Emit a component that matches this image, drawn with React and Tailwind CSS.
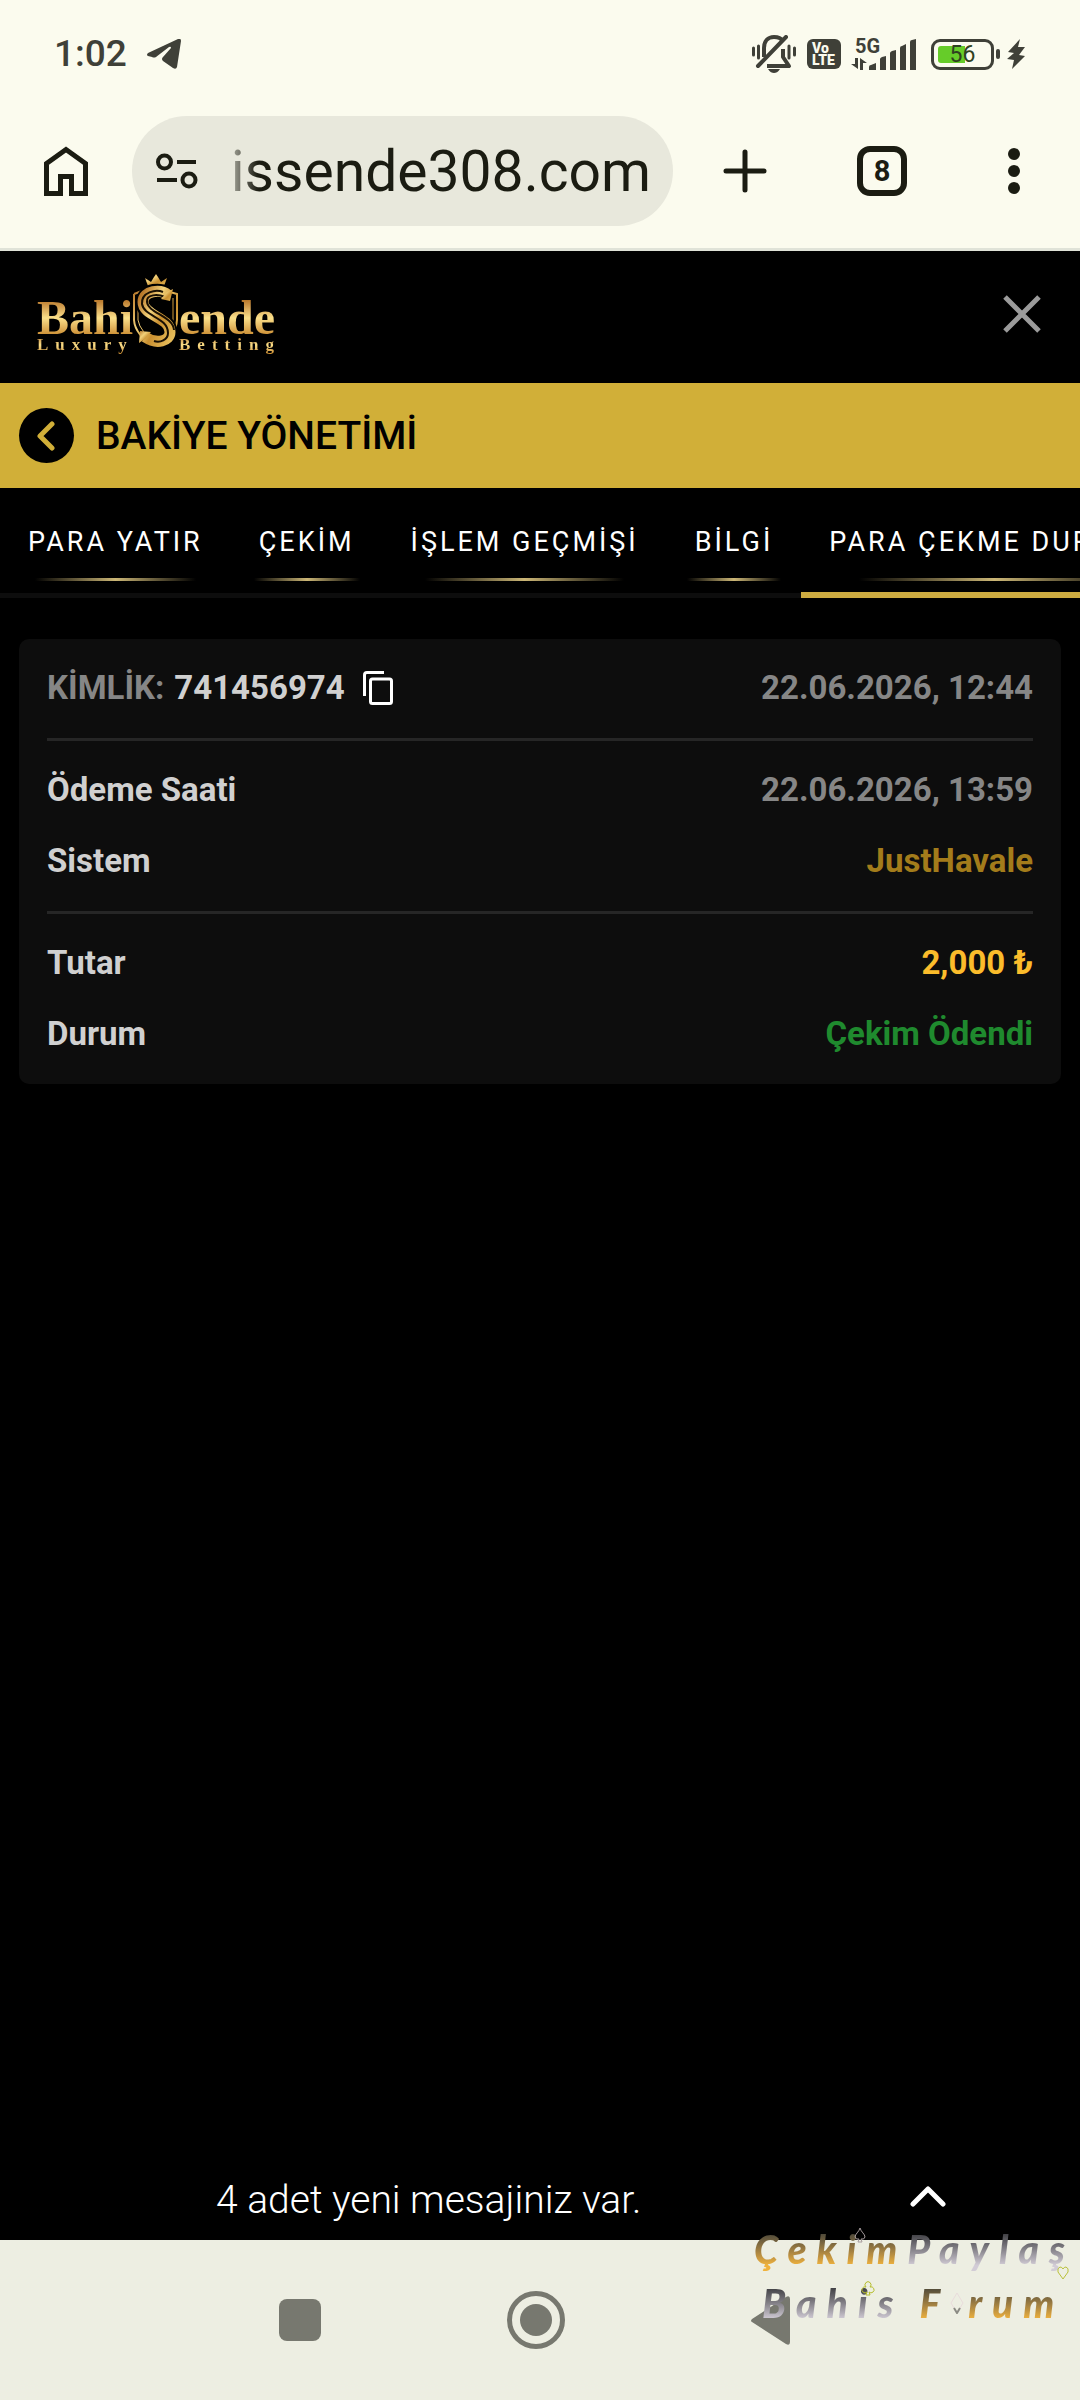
const tabs = ["PARA YATIR", "ÇEKİM", "İŞLEM GEÇMİŞİ", "BİLGİ", "PARA ÇEKME DURUMU"];
const activeTab = "PARA ÇEKME DURUMU";

const sections = [
  [
    { label: "Ödeme Saati", value: "22.06.2026, 13:59", color: "text-[#868686]" },
    { label: "Sistem", value: "JustHavale", color: "text-[#a37c1b]" },
  ],
  [
    { label: "Tutar", value: "2,000 ₺", color: "text-[#fbbc2b]" },
    { label: "Durum", value: "Çekim Ödendi", color: "text-[#1f8a2e]" },
  ],
];

function BellOffIcon() {
  return (
    <svg viewBox="0 0 44 38" className="w-11 h-[38px]" fill="none" stroke="currentColor" strokeWidth="4">
      <path d="M12 22V13C12 6 16 2 22 2c4 0 7 1 9 4" />
      <path d="M31 14v8l6 9H15" strokeLinejoin="round" />
      <path d="M6 31 34 2" strokeLinecap="round" />
      <path d="M16 34h12c-2 3-4 4-6 4s-4-1-6-4Z" fill="currentColor" stroke="none" />
      <path d="M1.500 13v7M6.500 11v12M37 11v12M42.500 13v7" strokeWidth="3" strokeLinecap="round" />
    </svg>
  );
}

function SignalIcon() {
  return (
    <div className="flex items-end">
      <div className="flex flex-col w-[18px] h-8">
        <span className="pl-1 text-[20px] leading-4 font-bold">5G</span>
        <svg viewBox="0 0 16 12" className="w-4 h-3 mt-auto" fill="currentColor">
          <path d="M4 0h3v11L0 6h4ZM9 12V0l7 5h-4v7Z" />
        </svg>
      </div>
      <svg viewBox="0 0 48 31" className="w-12 h-[31px]" fill="currentColor">
        <path d="M0 31v-3q0-2 2-2l5-2v7ZM11 31V20q0-1 2-2l4-1v14ZM21 31V14q0-1 2-2l4-1v20ZM31 31V9q0-2 2-2l4-2v26ZM41 31V3q0-2 2-2l4-1v31Z" />
      </svg>
    </div>
  );
}

function Battery() {
  return (
    <div className="flex items-center gap-[2px]">
      <div className="relative w-[63px] h-[31px] border-[3px] border-current rounded-[9px] p-1">
        <div className="w-[27px] h-full bg-[#66cc29] rounded-l-[3px]" />
        <span className="absolute inset-0 text-center text-[23px] leading-[26px] text-[#2f4020]">56</span>
      </div>
      <div className="w-1 h-[10px] bg-current rounded-[2px]" />
    </div>
  );
}

function StatusBar() {
  return (
    <div className="flex items-center justify-between h-[108px] pl-[54px] pr-[55px] text-[#3f4038]">
      <div className="flex items-center gap-5">
        <span className="text-[37px] leading-10 font-medium">1:02</span>
        <svg viewBox="0 0 34 30" className="w-[34px] h-[30px]" fill="currentColor">
          <path d="M1 14 31 0q3-1 3 2l-4 26q-1 3-4 1l-10-7q-2-2 0-4l8-9q0-2-2-1L9 18q-2 1-4 0l-4-1q-2-1 0-3Z" />
        </svg>
      </div>
      <div className="flex items-center">
        <BellOffIcon />
        <div className="flex flex-col justify-center w-[34px] h-[30px] ml-[11px] bg-[#3f4038] rounded-md text-[#fbfbee] text-[14px] leading-3 font-black pl-[5px]">
          <span>Vo</span>
          <span>LTE</span>
        </div>
        <div className="ml-[10px]">
          <SignalIcon />
        </div>
        <div className="ml-[14px]">
          <Battery />
        </div>
        <svg viewBox="0 0 18 30" className="w-[18px] h-[30px] ml-[7px]" fill="currentColor">
          <path d="M13 0 1 13l6 1-7 6 7 1-2 9L18 17l-6-1 6-8h-7Z" />
        </svg>
      </div>
    </div>
  );
}

function BrowserBar() {
  return (
    <div className="flex items-center pt-2 pb-[22px] pl-11 pr-[60px] text-[#1b1c12]">
      <button type="button" aria-label="Ana sayfa">
        <svg viewBox="0 0 44 50" className="w-11 h-[50px]" fill="none" stroke="currentColor" strokeWidth="5">
          <path d="M2.500 47.500V17.500L22 3.500l19.500 14v30H27.500v-17h-11v17Z" />
        </svg>
      </button>
      <div className="flex items-center flex-1 min-w-0 h-[110px] ml-11 pl-6 pr-[22px] bg-[#e8e8dc] rounded-full">
        <svg viewBox="0 0 42 36" className="w-[42px] h-9 shrink-0" fill="none" stroke="currentColor" strokeWidth="4">
          <circle cx="8.500" cy="9" r="6.500" />
          <path d="M21 9h19M1 27h20" />
          <circle cx="33" cy="27" r="6.500" />
        </svg>
        <input
          type="text"
          aria-label="Adres"
          defaultValue="issende308.com"
          className="flex-1 min-w-0 ml-5 pt-[2px] bg-transparent outline-none text-right text-[57px] leading-[70px] [mask-image:linear-gradient(to_right,transparent,black_40px)]"
        />
      </div>
      <button type="button" aria-label="Yeni sekme" className="ml-[50px]">
        <svg viewBox="0 0 44 44" className="w-11 h-11" fill="none" stroke="currentColor" strokeWidth="5" strokeLinecap="round">
          <path d="M22 3v38M3 22h38" />
        </svg>
      </button>
      <button
        type="button"
        aria-label="Sekmeler"
        className="ml-[90px] size-[50px] border-[6px] border-current rounded-[13px] text-[29px] leading-[38px] font-bold text-center"
      >
        8
      </button>
      <button type="button" aria-label="Menü" className="flex flex-col gap-[5px] ml-[101px]">
        <span className="size-3 rounded-full bg-current" />
        <span className="size-3 rounded-full bg-current" />
        <span className="size-3 rounded-full bg-current" />
      </button>
    </div>
  );
}

function Emblem() {
  return (
    <svg viewBox="0 0 46 76" className="w-[46px] h-[76px]" fill="none">
      <defs>
        <linearGradient id="gold" x1="0" y1="0" x2="1" y2="1">
          <stop offset="0" stopColor="#b9782a" />
          <stop offset="0.35" stopColor="#f3d27a" />
          <stop offset="0.6" stopColor="#c98f30" />
          <stop offset="1" stopColor="#e6bb58" />
        </linearGradient>
      </defs>
      <path d="M15 12 12 4l6 4 3-5 2-3 2 3 3 5 6-4-3 8Z" fill="url(#gold)" />
      <path d="M1 20l8-3M1 20v26q1 15 22 28 20-12 21-28V20l-7-2" stroke="url(#gold)" strokeWidth="2" />
      <path d="M5 24v22q2 12 18 22 15-9 17-22V24" stroke="url(#gold)" strokeWidth="1" />
      <path d="M36 21C30 15 10 15 10 29c0 13 27 14 27 29 0 9-13 14-25 5" stroke="#000" strokeWidth="15" />
      <path d="M35 21C28 15 10 16 10 28c0 14 27 15 27 30 0 9-13 13-25 5" stroke="url(#gold)" strokeWidth="11" />
      <path d="M30 18C23 15 8 18 9 30c2 13 26 13 26 29 0 7-8 10-14 8" stroke="#1a1003" strokeWidth="2" />
      <path d="M32 23C25 20 13 20 14 28c1 11 26 14 27 28" stroke="#1a1003" strokeWidth="2" />
      <path d="M28 25l9 2 3-12-6 3Z" fill="url(#gold)" />
      <path d="M18 58l-11-1-1 12 6-4Z" fill="url(#gold)" />
    </svg>
  );
}

const goldText = "bg-linear-to-b from-[#b9782a] via-[#fbe08a] to-[#c98a2c] bg-clip-text text-transparent";

function Logo() {
  return (
    <a href="#" aria-label="BahiSende Luxury Betting" className="flex items-end font-['Liberation_Serif',serif] font-bold">
      <span className="flex flex-col w-[96px]">
        <span className={`text-[48px] leading-9 ${goldText}`}>Bahi</span>
        <span className={`text-[17px] leading-[18px] tracking-[7px] ${goldText}`}>Luxury</span>
      </span>
      <span className="pb-1">
        <Emblem />
      </span>
      <span className="flex flex-col">
        <span className={`text-[48px] leading-9 ${goldText}`}>ende</span>
        <span className={`text-[17px] leading-[18px] tracking-[7px] ${goldText}`}>Betting</span>
      </span>
    </a>
  );
}

function Header() {
  return (
    <header className="flex items-center justify-between h-[132px] pb-[6px] px-[37px]">
      <Logo />
      <button type="button" aria-label="Kapat" className="text-[#9b9b9b]">
        <svg viewBox="0 0 42 42" className="w-[42px] h-[42px]" fill="none" stroke="currentColor" strokeWidth="5">
          <path d="M4 4l34 34M38 4 4 38" />
        </svg>
      </button>
    </header>
  );
}

function Tabs() {
  return (
    <nav className="flex overflow-hidden">
      {tabs.map((tab) => (
        <button
          key={tab}
          type="button"
          className={`flex flex-col items-center shrink-0 px-7 pt-9 h-[110px] text-[27px] leading-9 tracking-[3px] text-white whitespace-nowrap relative ${
            tab === activeTab ? "border-b-[6px] border-[#cdab41]" : "border-b-[5px] border-[#0d0d0d]"
          }`}
        >
          {tab}
          <span className="absolute top-[90px] left-[15%] w-[70%] h-[3px] bg-linear-to-r from-transparent via-[#cbb676] to-transparent" />
        </button>
      ))}
    </nav>
  );
}

function WithdrawalCard() {
  return (
    <section className="mx-[19px] mt-[41px] px-7 bg-[#0d0d0d] rounded-[10px] text-[33px] leading-10 font-bold text-[#d0d0d0]">
      <div className="flex items-center justify-between pt-[29px] pb-[30px] border-b-[3px] border-[#262626]">
        <div className="flex items-center">
          <span className="text-[#868686]">KİMLİK:</span>
          <span className="ml-[10px]">741456974</span>
          <button type="button" aria-label="Kopyala" className="ml-[18px] text-white">
            <svg viewBox="0 0 30 34" className="w-[30px] h-[34px]" fill="none" stroke="currentColor" strokeWidth="3">
              <path d="M1.500 25V4q0-2.500 2.500-2.500h17" />
              <rect x="7.500" y="8" width="21" height="24.500" rx="2" />
            </svg>
          </button>
        </div>
        <span className="text-[#868686]">22.06.2026, 12:44</span>
      </div>
      {sections.map((rows) => (
        <dl
          key={rows[0].label}
          className="flex flex-col gap-[31px] pt-[29px] pb-[30px] border-b-[3px] border-[#262626] last:border-b-0"
        >
          {rows.map((row) => (
            <div key={row.label} className="flex justify-between">
              <dt>{row.label}</dt>
              <dd className={row.color}>{row.value}</dd>
            </div>
          ))}
        </dl>
      ))}
    </section>
  );
}

const orangeInk = "bg-linear-to-b from-[#4a4638] from-20% to-[#f0b23c] to-80% bg-clip-text text-transparent";
const silverInk = "bg-linear-to-b from-[#3c3c40] from-20% to-[#d2ccd6] to-80% bg-clip-text text-transparent";

function Watermark() {
  return (
    <div className="absolute right-0 top-[-18px] w-[326px] font-['Lato',sans-serif] italic font-black text-[39px] leading-[54px] tracking-[10px] whitespace-nowrap pointer-events-none">
      <div className="flex">
        <span className={orangeInk}>Çekim</span>
        <span className={silverInk}>Paylaş</span>
      </div>
      <div className="flex items-center pl-2">
        <span className={silverInk}>Bahis</span>
        <span className={`ml-4 ${orangeInk}`}>F</span>
        <svg viewBox="0 0 14 22" className="w-[14px] h-[22px] mr-1" fill="none" stroke="#e9dcdc" strokeWidth="1">
          <path d="M7 1l6 10-6 10L1 11Z" />
          <path d="M4 16l3 5 3-5" stroke="#8b8b84" strokeWidth="2" />
        </svg>
        <span className={orangeInk}>rum</span>
      </div>
      <svg viewBox="0 0 12 16" className="absolute left-[100px] top-[5px] w-3 h-4" fill="none" stroke="#a79c9e">
        <path d="M6 1C5 5 1 7 1 10q1 3 4 2l-1 3h4l-1-3q3 1 4-2C11 7 7 5 6 1Z" />
      </svg>
      <svg viewBox="0 0 14 16" className="absolute left-[107px] top-[58px] w-[14px] h-4" fill="none" stroke="#b5bd2c">
        <path d="M5 7A3 3 0 1 1 9 7A3 3 0 1 1 8 12L9 15H5L6 12A3 3 0 1 1 5 7Z" />
      </svg>
      <svg viewBox="0 0 12 14" className="absolute right-[11px] top-[44px] w-3 h-[14px]" fill="none" stroke="#b9c03a">
        <path d="M6 13 1 6q-1-4 2-5 2 0 3 2 1-2 3-2 3 1 2 5Z" />
      </svg>
    </div>
  );
}

function SystemNav() {
  return (
    <footer className="relative flex items-center justify-center gap-[186px] h-40 pr-[11px] bg-[#edeee2] text-[#77786f]">
      <button type="button" aria-label="Son uygulamalar" className="size-[42px] rounded-lg bg-current" />
      <button
        type="button"
        aria-label="Ana ekran"
        className="flex items-center justify-center size-[58px] rounded-full border-[5px] border-current"
      >
        <span className="size-8 rounded-full bg-current" />
      </button>
      <button type="button" aria-label="Geri">
        <svg viewBox="0 0 39 49" className="w-[39px] h-[49px]" fill="currentColor">
          <path d="M1 23 35 1q4-2 4 2v43q0 4-4 2L1 26q-2-1 0-3Z" />
        </svg>
      </button>
      <Watermark />
    </footer>
  );
}

export default function App() {
  return (
    <div className="flex flex-col min-h-screen bg-black font-['Roboto',sans-serif]">
      <div className="bg-[#fbfbee] border-b-[3px] border-[#e0e3d8]">
        <StatusBar />
        <BrowserBar />
      </div>

      <Header />

      <div className="flex items-center h-[105px] pl-[19px] bg-[#d1af38]">
        <button type="button" aria-label="Geri dön" className="flex items-center justify-center size-[55px] rounded-full bg-black">
          <svg viewBox="0 0 18 30" className="w-[18px] h-[30px] mr-[2px]" fill="none" stroke="#d1af38" strokeWidth="5" strokeLinecap="round" strokeLinejoin="round">
            <path d="M15 3 3 15l12 12" />
          </svg>
        </button>
        <h1 className="ml-[22px] text-[39px] leading-[46px] font-medium text-black">BAKİYE YÖNETİMİ</h1>
      </div>

      <Tabs />

      <main className="flex-1">
        <WithdrawalCard />
      </main>

      {/* Mesaj bildirimi */}
      <div className="flex items-center justify-between h-20 pl-[216px] pr-[134px] text-white">
        <p className="text-[39px] leading-[46px] font-light">4 adet yeni mesajiniz var.</p>
        <button type="button" aria-label="Mesajları aç">
          <svg viewBox="0 0 36 28" className="w-9 h-7" fill="none" stroke="currentColor" strokeWidth="5" strokeLinecap="round" strokeLinejoin="round">
            <path d="M3 18 18 3l15 15" />
          </svg>
        </button>
      </div>

      <SystemNav />
    </div>
  );
}
